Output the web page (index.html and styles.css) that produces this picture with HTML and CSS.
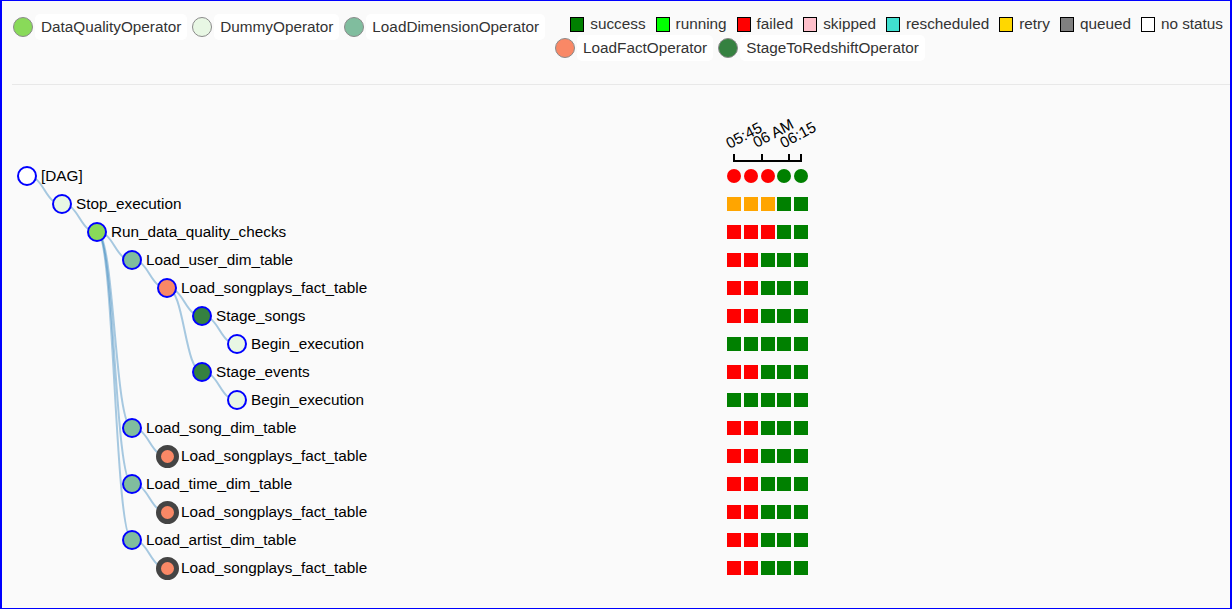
FILE: index.html
```html
<!DOCTYPE html>
<html>
<head>
<meta charset="utf-8">
<title>Tree View</title>
<link rel="stylesheet" href="styles.css">
</head>
<body>
<div class="frame">
  <header class="legend">
    <div class="ops first">
      <div class="op"><span class="dot op-dq"></span><span class="tag">DataQualityOperator</span></div>
      <div class="op"><span class="dot op-dummy"></span><span class="tag">DummyOperator</span></div>
      <div class="op"><span class="dot op-dim"></span><span class="tag">LoadDimensionOperator</span></div>
    </div>
    <div class="legend-right">
      <div class="states">
        <span class="state"><span class="sq st-success"></span>success</span>
        <span class="state"><span class="sq st-running"></span>running</span>
        <span class="state"><span class="sq st-failed"></span>failed</span>
        <span class="state"><span class="sq st-skipped"></span>skipped</span>
        <span class="state"><span class="sq st-rescheduled"></span>rescheduled</span>
        <span class="state"><span class="sq st-retry"></span>retry</span>
        <span class="state"><span class="sq st-queued"></span>queued</span>
        <span class="state"><span class="sq st-none"></span>no status</span>
      </div>
      <div class="ops">
        <div class="op"><span class="dot op-fact"></span><span class="tag">LoadFactOperator</span></div>
        <div class="op"><span class="dot op-stage"></span><span class="tag">StageToRedshiftOperator</span></div>
      </div>
    </div>
  </header>
  <hr class="divider">
  <main class="tree">
    <div class="row axis-row">
      <div></div>
      <svg class="axis" width="100" height="77" viewBox="0 0 100 77">
        <path class="axis-line" d="M7,69 V76 H74 V69 M35,76 V69 M62,76 V69"></path>
        <text transform="translate(2.5,64) rotate(-28)">05:45</text>
        <text transform="translate(29.5,63) rotate(-28)">06 AM</text>
        <text transform="translate(56.5,63.5) rotate(-28)">06:15</text>
      </svg>
    </div>
    <div class="rows">
      <svg class="links" width="720" height="420" viewBox="0 0 720 420">
        <path d="M25,14 C42.5,14 42.5,42 60,42"></path>
        <path d="M60,42 C77.5,42 77.5,70 95,70"></path>
        <path d="M95,70 C112.5,70 112.5,98 130,98"></path>
        <path d="M95,70 C112.5,70 112.5,266 130,266"></path>
        <path d="M95,70 C112.5,70 112.5,322 130,322"></path>
        <path d="M95,70 C112.5,70 112.5,378 130,378"></path>
        <path d="M130,98 C147.5,98 147.5,126 165,126"></path>
        <path d="M165,126 C182.5,126 182.5,154 200,154"></path>
        <path d="M165,126 C182.5,126 182.5,210 200,210"></path>
        <path d="M200,154 C217.5,154 217.5,182 235,182"></path>
        <path d="M200,210 C217.5,210 217.5,238 235,238"></path>
        <path d="M130,266 C147.5,266 147.5,294 165,294"></path>
        <path d="M130,322 C147.5,322 147.5,350 165,350"></path>
        <path d="M130,378 C147.5,378 147.5,406 165,406"></path>
      </svg>

      <div class="row">
        <div class="node l0"><span class="circle f-none"></span><span class="name">[DAG]</span></div>
        <div class="runs"><span class="run dag failed"></span><span class="run dag failed"></span><span class="run dag failed"></span><span class="run dag success"></span><span class="run dag success"></span></div>
      </div>
      <div class="row">
        <div class="node l1"><span class="circle f-dummy"></span><span class="name">Stop_execution</span></div>
        <div class="runs"><span class="run retry"></span><span class="run retry"></span><span class="run retry"></span><span class="run success"></span><span class="run success"></span></div>
      </div>
      <div class="row">
        <div class="node l2"><span class="circle f-dq"></span><span class="name">Run_data_quality_checks</span></div>
        <div class="runs"><span class="run failed"></span><span class="run failed"></span><span class="run failed"></span><span class="run success"></span><span class="run success"></span></div>
      </div>
      <div class="row">
        <div class="node l3"><span class="circle f-dim"></span><span class="name">Load_user_dim_table</span></div>
        <div class="runs"><span class="run failed"></span><span class="run failed"></span><span class="run success"></span><span class="run success"></span><span class="run success"></span></div>
      </div>
      <div class="row">
        <div class="node l4"><span class="circle f-fact"></span><span class="name">Load_songplays_fact_table</span></div>
        <div class="runs"><span class="run failed"></span><span class="run failed"></span><span class="run success"></span><span class="run success"></span><span class="run success"></span></div>
      </div>
      <div class="row">
        <div class="node l5"><span class="circle f-stage"></span><span class="name">Stage_songs</span></div>
        <div class="runs"><span class="run failed"></span><span class="run failed"></span><span class="run success"></span><span class="run success"></span><span class="run success"></span></div>
      </div>
      <div class="row">
        <div class="node l6"><span class="circle f-dummy"></span><span class="name">Begin_execution</span></div>
        <div class="runs"><span class="run success"></span><span class="run success"></span><span class="run success"></span><span class="run success"></span><span class="run success"></span></div>
      </div>
      <div class="row">
        <div class="node l5"><span class="circle f-stage"></span><span class="name">Stage_events</span></div>
        <div class="runs"><span class="run failed"></span><span class="run failed"></span><span class="run success"></span><span class="run success"></span><span class="run success"></span></div>
      </div>
      <div class="row">
        <div class="node l6"><span class="circle f-dummy"></span><span class="name">Begin_execution</span></div>
        <div class="runs"><span class="run success"></span><span class="run success"></span><span class="run success"></span><span class="run success"></span><span class="run success"></span></div>
      </div>
      <div class="row">
        <div class="node l3"><span class="circle f-dim"></span><span class="name">Load_song_dim_table</span></div>
        <div class="runs"><span class="run failed"></span><span class="run failed"></span><span class="run success"></span><span class="run success"></span><span class="run success"></span></div>
      </div>
      <div class="row">
        <div class="node l4"><span class="circle f-fact collapsed"></span><span class="name">Load_songplays_fact_table</span></div>
        <div class="runs"><span class="run failed"></span><span class="run failed"></span><span class="run success"></span><span class="run success"></span><span class="run success"></span></div>
      </div>
      <div class="row">
        <div class="node l3"><span class="circle f-dim"></span><span class="name">Load_time_dim_table</span></div>
        <div class="runs"><span class="run failed"></span><span class="run failed"></span><span class="run success"></span><span class="run success"></span><span class="run success"></span></div>
      </div>
      <div class="row">
        <div class="node l4"><span class="circle f-fact collapsed"></span><span class="name">Load_songplays_fact_table</span></div>
        <div class="runs"><span class="run failed"></span><span class="run failed"></span><span class="run success"></span><span class="run success"></span><span class="run success"></span></div>
      </div>
      <div class="row">
        <div class="node l3"><span class="circle f-dim"></span><span class="name">Load_artist_dim_table</span></div>
        <div class="runs"><span class="run failed"></span><span class="run failed"></span><span class="run success"></span><span class="run success"></span><span class="run success"></span></div>
      </div>
      <div class="row">
        <div class="node l4"><span class="circle f-fact collapsed"></span><span class="name">Load_songplays_fact_table</span></div>
        <div class="runs"><span class="run failed"></span><span class="run failed"></span><span class="run success"></span><span class="run success"></span><span class="run success"></span></div>
      </div>
    </div>
  </main>
</div>
</body>
</html>
```

FILE: styles.css
```css
* { box-sizing: border-box; }

html, body {
  margin: 0;
  padding: 0;
}

body {
  font-family: "Liberation Sans", Arial, sans-serif;
  background: #ffffff;
}

.frame {
  width: 1232px;
  height: 609px;
  border-style: solid;
  border-color: #0000ff;
  border-width: 1px 2px 1px 2px;
  background: #fafafa;
  overflow: hidden;
}

/* ---------- legend ---------- */
.legend {
  display: flex;
  align-items: flex-start;
  padding: 12px 7px 0 11px;
}

.ops {
  display: flex;
  align-items: center;
}

.ops.first {
  margin-top: 1px;
}

.op {
  display: flex;
  align-items: center;
  margin-right: 5px;
}

.dot {
  flex: none;
  width: 20px;
  height: 20px;
  border-radius: 50%;
  border: 1px solid #8a8a8a;
  margin-right: 2px;
}

.tag {
  background: #ffffff;
  border-radius: 5px;
  padding: 4px 6px;
  font-size: 15.3px;
  line-height: 18px;
  color: #333333;
}

.op-dq, .f-dq { background: #89da59; }
.op-dummy, .f-dummy { background: #e8f7e4; }
.op-dim, .f-dim { background: #80bd9e; }
.op-fact, .f-fact { background: #f98866; }
.op-stage, .f-stage { background: #358140; }
.f-none { background: #ffffff; }

.legend-right {
  flex: 1;
  margin-left: 5px;
  display: flex;
  flex-direction: column;
}

.states {
  display: flex;
  justify-content: flex-end;
  align-items: center;
  height: 22px;
  font-size: 15.3px;
  color: #333333;
}

.state {
  display: flex;
  align-items: center;
  margin-left: 10px;
}

.sq {
  flex: none;
  width: 14px;
  height: 15px;
  border: 1px solid #000000;
  margin-right: 6px;
}

.st-success { background: #008000; }
.st-running { background: #00ff00; }
.st-failed { background: #ff0000; }
.st-skipped { background: #ffc0cb; }
.st-rescheduled { background: #40e0d0; }
.st-retry { background: #ffd700; }
.st-queued { background: #808080; }
.st-none { background: #ffffff; }

.divider {
  border: 0;
  border-top: 1px solid #e8e8e8;
  height: 0;
  margin: 23px 0 0 10px;
}

/* ---------- tree ---------- */
.row {
  display: grid;
  grid-template-columns: 710px auto;
  align-items: center;
  height: 28px;
  padding-left: 15px;
}

.axis-row {
  height: 77px;
  align-items: start;
}

.axis {
  display: block;
  overflow: visible;
}

.axis-line {
  fill: none;
  stroke: #000000;
  stroke-width: 2;
}

.axis text {
  font-family: "Liberation Sans", Arial, sans-serif;
  font-size: 15.3px;
  fill: #000000;
}

.rows {
  position: relative;
}

.links {
  position: absolute;
  left: 0;
  top: 0;
}

.links path {
  fill: none;
  stroke: #3182bd;
  stroke-opacity: 0.42;
  stroke-width: 2;
}

.node {
  display: flex;
  align-items: center;
  position: relative;
  z-index: 1;
}

.l1 { padding-left: 35px; }
.l2 { padding-left: 70px; }
.l3 { padding-left: 105px; }
.l4 { padding-left: 140px; }
.l5 { padding-left: 175px; }
.l6 { padding-left: 210px; }

.circle {
  flex: none;
  width: 20px;
  height: 20px;
  border-radius: 50%;
  border: 2px solid #0000ff;
}

.circle.collapsed {
  width: 23px;
  height: 23px;
  margin: 0 -1.5px;
  border: 5.5px solid #444444;
}

.name {
  margin-left: 4px;
  font-size: 15.3px;
  line-height: 18px;
  color: #000000;
  white-space: nowrap;
}

.runs {
  display: flex;
  align-items: center;
  gap: 2.75px;
}

.run {
  width: 14px;
  height: 14px;
}

.run.dag { border-radius: 50%; }
.run.success { background: #008000; }
.run.failed { background: #ff0000; }
.run.retry { background: #ffa500; }
```
